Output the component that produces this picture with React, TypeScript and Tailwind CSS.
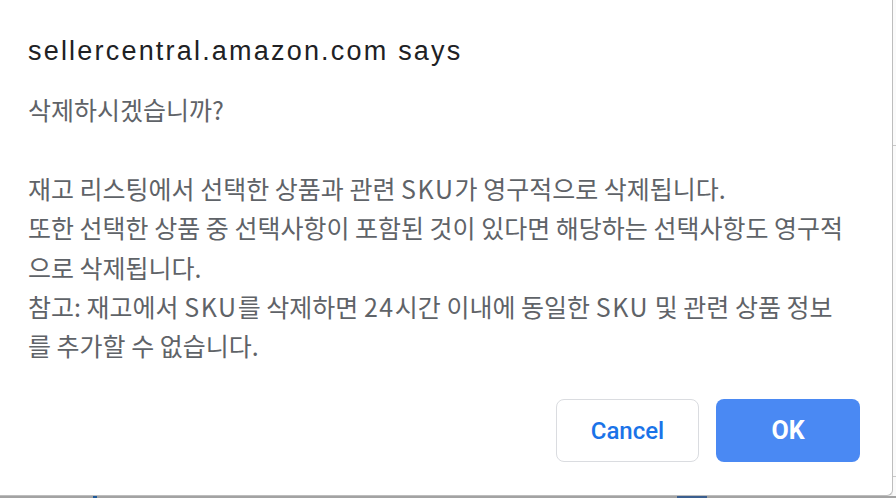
import React from "react";

function L({ children }: { children: React.ReactNode }) {
  return <span className="tracking-[1.6px]">{children}</span>;
}

export default function App() {
  const body = "#5f6368";
  return (
    <div className="w-[896px] h-[498px] overflow-hidden bg-[#f3f3f3] flex flex-col">
      <div className="flex flex-1">
        <div className="w-[893px] h-[496px] bg-white border-r border-b border-[#bdbdbd] rounded-br-[6px] flex flex-col pl-[28px] pr-[32px]">
          <div
            className="mt-[35px] text-[27px] leading-[32px] tracking-[2.2px] text-[#202124] whitespace-nowrap"
            style={{ fontFamily: '"Liberation Sans", Arial, sans-serif' }}
          >
            sellercentral.amazon.com says
          </div>
          <div
            className="mt-[23px] text-[25px] leading-[39.4px] whitespace-nowrap"
            style={{ color: body, fontFamily: '"Noto Sans CJK KR", "Noto Sans", sans-serif' }}
          >
            <div>삭제하시겠습니까?</div>
            <div>&nbsp;</div>
            <div>재고 리스팅에서 선택한 상품과 관련 <L>SKU</L>가 영구적으로 삭제됩니다.</div>
            <div>또한 선택한 상품 중 선택사항이 포함된 것이 있다면 해당하는 선택사항도 영구적</div>
            <div>으로 삭제됩니다.</div>
            <div>참고: 재고에서 <L>SKU</L>를 삭제하면 <L>24</L>시간 이내에 동일한 <L>SKU</L> 및 관련 상품 정보</div>
            <div>를 추가할 수 없습니다.</div>
          </div>
          <div className="flex-1" />
          <div className="flex justify-end gap-[17px] mb-[33px]">
            <button
              className="w-[143px] h-[63px] rounded-[8px] border border-[#dadce0] bg-white text-[#1a73e8] text-[24px] font-medium"
              style={{ fontFamily: "Roboto, sans-serif" }}
            >
              Cancel
            </button>
            <button
              className="w-[144px] h-[63px] rounded-[8px] bg-[#4a89f3] text-white text-[25px] font-bold"
              style={{ fontFamily: "Roboto, sans-serif" }}
            >
              OK
            </button>
          </div>
        </div>
        <div className="flex-1 flex flex-col bg-[#fafafa]">
          <div className="h-[145px]" />
          <div className="h-px bg-[#c8c8c8]" />
          <div className="h-[330px]" />
          <div className="h-px bg-[#c8c8c8]" />
        </div>
      </div>
      <div className="h-[2px] bg-[#a3a3a3] flex">
        <div className="ml-[93px] w-[4px] bg-[#1f5a99]" />
        <div className="ml-[580px] w-[30px] bg-[#3b5f8f]" />
      </div>
    </div>
  );
}
